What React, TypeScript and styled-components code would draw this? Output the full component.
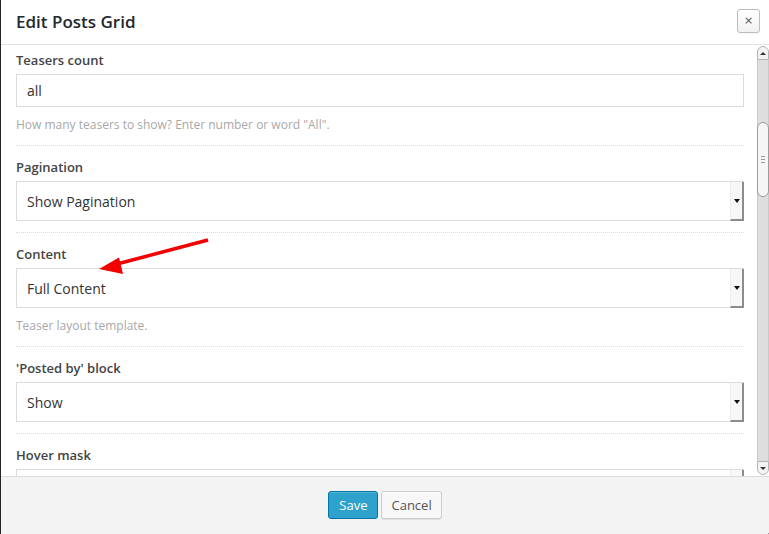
import styled, { createGlobalStyle } from "styled-components";

const GlobalStyle = createGlobalStyle`
  html, body {
    margin: 0;
    padding: 0;
    height: 100%;
    background: #262626;
    font-family: "Open Sans", "Noto Sans", sans-serif;
  }
  #root {
    height: 100%;
  }
`;

const Backdrop = styled.div`
  height: 534px;
  padding-left: 1px;
  box-sizing: border-box;
`;

const Modal = styled.div`
  position: relative;
  height: 100%;
  display: flex;
  flex-direction: column;
  background: #fff;
  border-bottom-right-radius: 2px;
  overflow: hidden;
`;

const Header = styled.div`
  height: 44px;
  flex-shrink: 0;
  display: flex;
  justify-content: space-between;
  align-items: flex-start;
  padding: 0 9px 0 15px;
  border-bottom: 1px solid #e1e1e1;
`;

const Title = styled.h1`
  margin: 10px 0 0;
  font-size: 17px;
  line-height: 24px;
  font-weight: 600;
  color: #23282d;
`;

const CloseButton = styled.button`
  margin-top: 9px;
  width: 23px;
  height: 24px;
  padding: 0;
  border: 1px solid #bdbdbd;
  border-radius: 3px;
  background: linear-gradient(#ffffff, #f1f1f1);
  color: #555;
  font-family: "DejaVu Sans", sans-serif;
  font-size: 11px;
  line-height: 20px;
  box-shadow: 0 1px 0 rgba(0, 0, 0, 0.04);
`;

const BodyRow = styled.div`
  flex: 1;
  min-height: 0;
  display: flex;
  overflow: hidden;
`;

const Content = styled.div`
  flex: 1;
  padding: 0 13px 0 15px;
  overflow: hidden;
`;

const Section = styled.div<{ $first?: boolean }>`
  padding: ${(p) => (p.$first ? "6px 0 11px" : "12px 0 11px")};
  border-bottom: 1px dotted #dcdcdc;
`;

const Label = styled.div`
  font-size: 13px;
  line-height: 18px;
  font-weight: 600;
  color: #444;
  margin-bottom: 5px;
`;

const TextInput = styled.div`
  height: 33px;
  box-sizing: border-box;
  border: 1px solid #dcdcdc;
  padding: 0 10px;
  display: flex;
  align-items: center;
  font-size: 14px;
  color: #333;
`;

const Select = styled.div`
  height: 40px;
  box-sizing: border-box;
  border: 1px solid #dcdcdc;
  display: flex;
  align-items: stretch;
  font-size: 14px;
  color: #333;
`;

const SelectValue = styled.div`
  flex: 1;
  display: flex;
  align-items: center;
  padding: 0 10px;
`;

const SelectArrow = styled.div`
  width: 11px;
  margin: 0 -1px -1px 0;
  background: #f7f7f7;
  border-left: 1px solid #ececec;
  border-right: 2px solid #8c8c8c;
  border-bottom: 2px solid #8c8c8c;
  display: flex;
  align-items: center;
  justify-content: center;

  &::after {
    content: "";
    border-left: 3px solid transparent;
    border-right: 3px solid transparent;
    border-top: 4px solid #111;
    margin-top: 1px;
  }
`;

const Help = styled.div`
  margin-top: 9px;
  font-size: 12px;
  line-height: 18px;
  color: #a8a8a8;
`;

const Scrollbar = styled.div`
  width: 12px;
  flex-shrink: 0;
  display: flex;
  flex-direction: column;
  padding: 1px 0 1px;
  box-sizing: border-box;
  background: #fff;
`;

const ScrollButton = styled.div<{ $down?: boolean }>`
  height: 14px;
  flex-shrink: 0;
  box-sizing: border-box;
  background: #f3f3f3;
  border: 1px solid #b4b4b4;
  border-radius: ${(p) => (p.$down ? "0 0 6px 6px" : "6px 6px 0 0")};
  display: flex;
  align-items: center;
  justify-content: center;

  &::after {
    content: "";
    border-left: 3px solid transparent;
    border-right: 3px solid transparent;
    ${(p) =>
      p.$down ? "border-top: 3px solid #333;" : "border-bottom: 3px solid #333;"}
  }
`;

const Track = styled.div`
  flex: 1;
  background: #dedede;
  border-left: 1px solid #c8c8c8;
  border-right: 1px solid #c8c8c8;
  padding-top: 62px;
`;

const Thumb = styled.div`
  height: 75px;
  margin: 0 -1px;
  box-sizing: border-box;
  background: #f6f6f6;
  border: 1px solid #9c9c9c;
  border-radius: 6px;
  display: flex;
  align-items: center;
  justify-content: center;
`;

const Grip = styled.div`
  width: 4px;
  height: 5px;
  border-top: 1px solid #999;
  border-bottom: 1px solid #999;
  position: relative;

  &::after {
    content: "";
    position: absolute;
    left: 0;
    right: 0;
    top: 2px;
    border-top: 1px solid #999;
  }
`;

const Footer = styled.div`
  height: 58px;
  flex-shrink: 0;
  box-sizing: border-box;
  border-top: 1px solid #dcdcdc;
  background: #f3f3f3;
  display: flex;
  justify-content: center;
  align-items: flex-start;
  gap: 3px;
  padding-top: 14px;
`;

const Button = styled.button<{ $primary?: boolean }>`
  height: 28px;
  padding: 0 ${(p) => (p.$primary ? "10px" : "9px")};
  border-radius: 3px;
  font-family: "Open Sans", sans-serif;
  font-size: 13px;
  line-height: 26px;
  border: 1px solid ${(p) => (p.$primary ? "#0074a2" : "#cccccc")};
  background: ${(p) => (p.$primary ? "#2ea2cc" : "#f7f7f7")};
  color: ${(p) => (p.$primary ? "#ffffff" : "#555555")};
  box-shadow: ${(p) =>
    p.$primary
      ? "inset 0 1px 0 rgba(120, 200, 230, 0.5)"
      : "inset 0 1px 0 #fff, 0 1px 0 rgba(0, 0, 0, 0.08)"};
`;

const Annotation = styled.svg`
  position: absolute;
  left: 90px;
  top: 232px;
  pointer-events: none;
`;

type Field = {
  label: string;
  kind: "input" | "select";
  value?: string;
  help?: string;
};

const fields: Field[] = [
  {
    label: "Teasers count",
    kind: "input",
    value: "all",
    help: 'How many teasers to show? Enter number or word "All".',
  },
  { label: "Pagination", kind: "select", value: "Show Pagination" },
  {
    label: "Content",
    kind: "select",
    value: "Full Content",
    help: "Teaser layout template.",
  },
  { label: "'Posted by' block", kind: "select", value: "Show" },
  { label: "Hover mask", kind: "select", value: "" },
];

function App() {
  return (
    <Backdrop>
      <GlobalStyle />
      <Modal>
        <Header>
          <Title>Edit Posts Grid</Title>
          <CloseButton>×</CloseButton>
        </Header>

        <BodyRow>
          <Content>
            {fields.map((field, i) => (
              <Section key={field.label} $first={i === 0}>
                <Label>{field.label}</Label>
                {field.kind === "input" ? (
                  <TextInput>{field.value}</TextInput>
                ) : (
                  <Select>
                    <SelectValue>{field.value}</SelectValue>
                    <SelectArrow />
                  </Select>
                )}
                {field.help && <Help>{field.help}</Help>}
              </Section>
            ))}
          </Content>

          <Scrollbar>
            <ScrollButton />
            <Track>
              <Thumb>
                <Grip />
              </Thumb>
            </Track>
            <ScrollButton $down />
          </Scrollbar>
        </BodyRow>

        <Footer>
          <Button $primary>Save</Button>
          <Button>Cancel</Button>
        </Footer>

        {/* red annotation arrow pointing at the Content select */}
        <Annotation width="130" height="50" viewBox="0 0 130 50">
          <line x1="117" y1="8" x2="26" y2="32" stroke="#f20000" strokeWidth="3.5" />
          <polygon points="8,37 28,25.5 32,42" fill="#f20000" />
        </Annotation>
      </Modal>
    </Backdrop>
  );
}

export default App;
